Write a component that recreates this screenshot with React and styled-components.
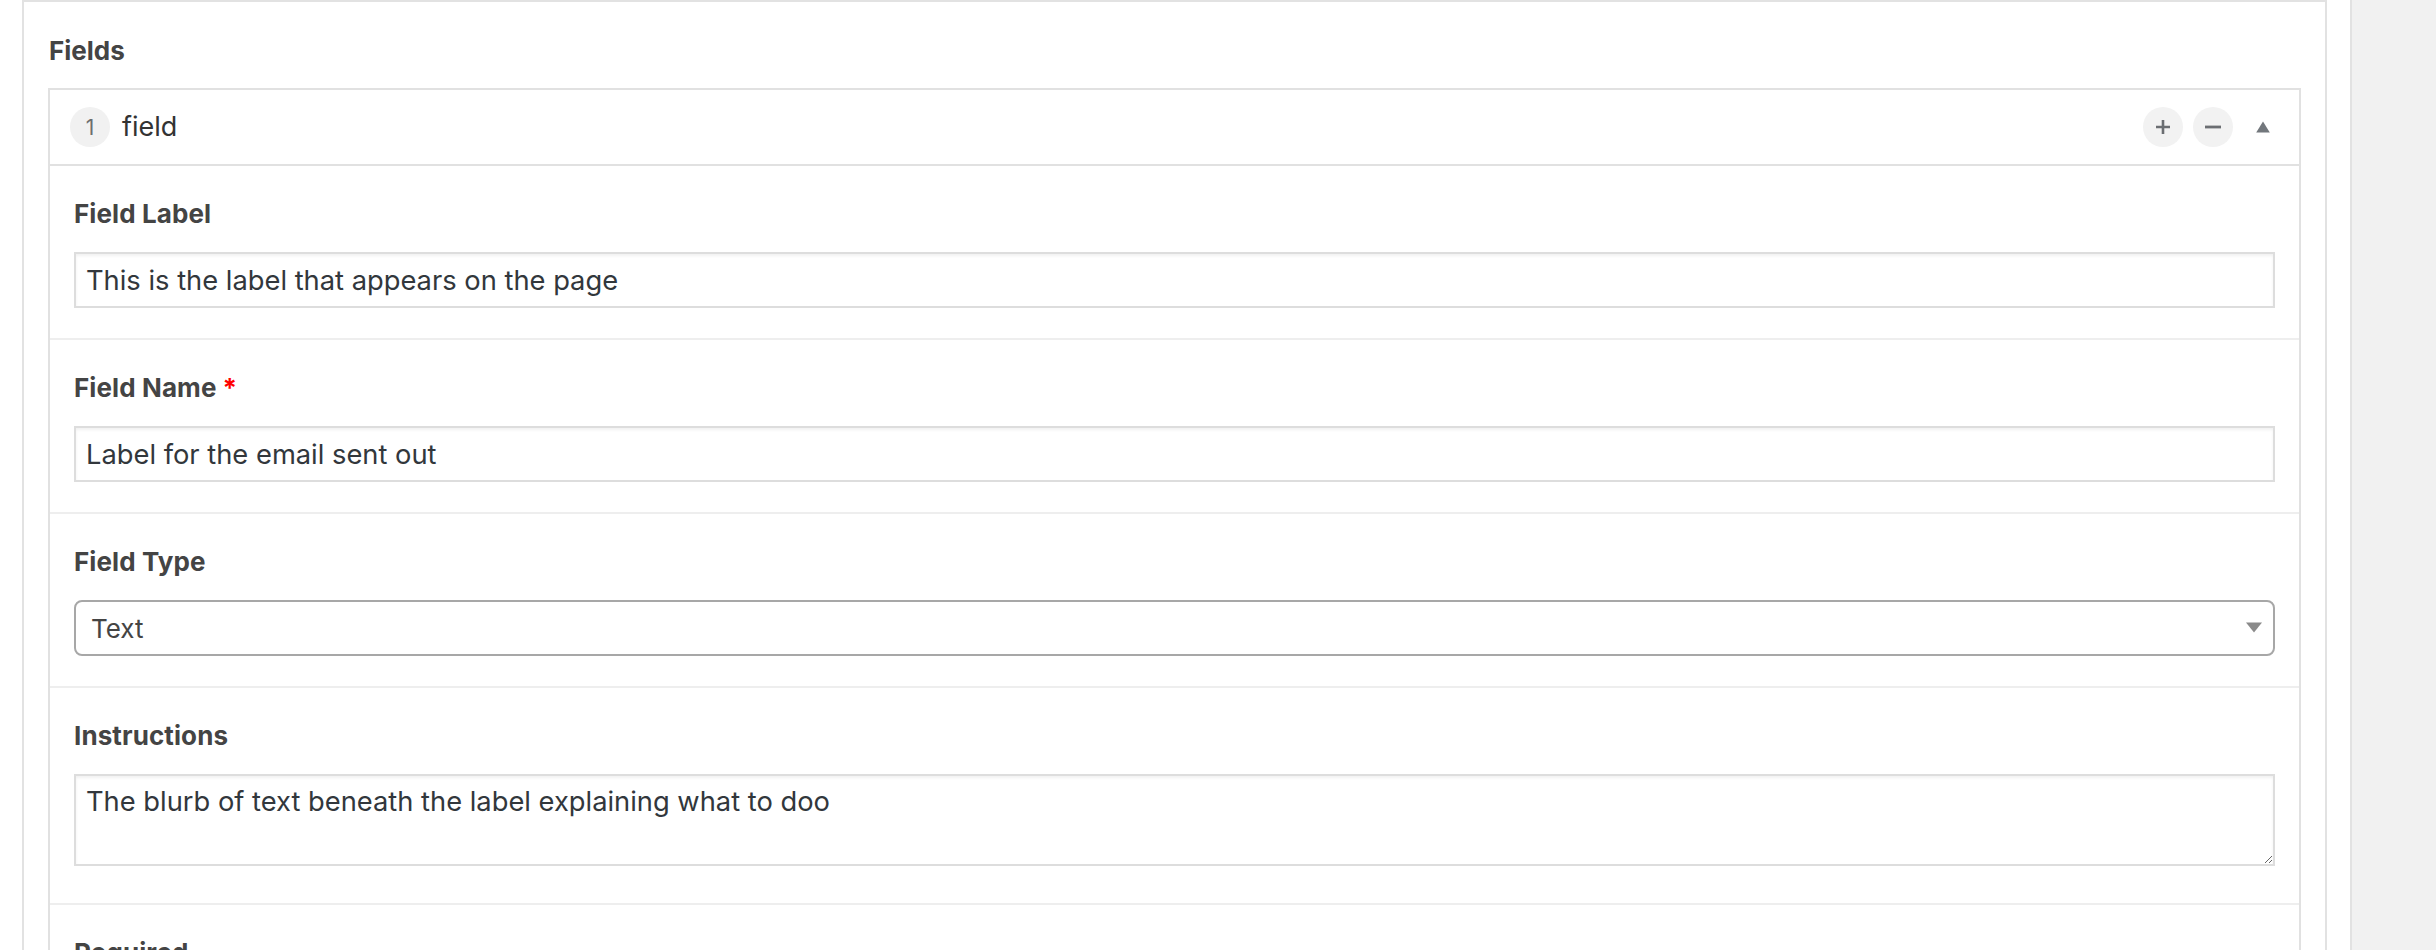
import React from "react";
import styled, { createGlobalStyle } from "styled-components";

const Global = createGlobalStyle`
  html, body {
    margin: 0;
    padding: 0;
    overflow: hidden;
    background: #ffffff;
    font-family: Inter, "Noto Sans", "Liberation Sans", sans-serif;
  }
  * { box-sizing: border-box; }
`;

const Page = styled.div`
  display: flex;
  height: 950px;
  overflow: hidden;
`;

const Main = styled.div`
  flex: 1;
  padding: 0 23px 0 22px;
`;

const Sidebar = styled.aside`
  width: 86px;
  flex: none;
  background: #f1f1f1;
  border-left: 2px solid #e2e2e2;
`;

const Panel = styled.section`
  border: 2px solid #e2e2e2;
  padding: 33px 24px 40px;
  background: #fff;
`;

const PanelTitle = styled.h2`
  margin: 0 0 21px;
  font-size: 26px;
  line-height: 32px;
  font-weight: 700;
  color: #444;
  padding-left: 1px;
`;

const Repeater = styled.div`
  border: 2px solid #e1e1e1;
`;

const Header = styled.div`
  display: flex;
  align-items: center;
  height: 76px;
  padding: 0 16px 0 20px;
  border-bottom: 2px solid #e1e1e1;
`;

const Badge = styled.span`
  width: 40px;
  height: 40px;
  border-radius: 50%;
  background: #f1f1f1;
  color: #6e6e6e;
  font-size: 21px;
  display: flex;
  align-items: center;
  justify-content: center;
  flex: none;
`;

const RowTitle = styled.span`
  margin-left: 12px;
  margin-top: -2px;
  font-size: 27px;
  color: #333;
  flex: 1;
`;

const Actions = styled.div`
  display: flex;
  align-items: center;
  gap: 10px;
`;

const RoundButton = styled.button`
  width: 40px;
  height: 40px;
  border-radius: 50%;
  border: none;
  padding: 0;
  background: #f2f2f2;
  display: flex;
  align-items: center;
  justify-content: center;
  cursor: pointer;
`;

const Toggle = styled.span`
  width: 40px;
  height: 40px;
  display: flex;
  align-items: center;
  justify-content: center;
`;

const Field = styled.div`
  padding: 30px 24px ${(p) => p.$bottom || 30}px;
  border-top: ${(p) => (p.$first ? "none" : "2px solid #eeeeee")};
`;

const Label = styled.label`
  display: block;
  margin: 0 0 20px;
  font-size: 26px;
  line-height: 36px;
  font-weight: 700;
  color: #444;
  letter-spacing: 0.1px;
`;

const Required = styled.span`
  color: #f00;
  margin-left: 6px;
`;

const TextInput = styled.input`
  display: block;
  width: 100%;
  height: 56px;
  border: 2px solid #dddddd;
  box-shadow: inset 0 2px 3px rgba(0, 0, 0, 0.06);
  padding: 0 10px;
  font-family: inherit;
  font-size: 27.3px;
  color: #32373c;
  background: #fff;
  outline: none;
`;

const SelectWrap = styled.div`
  position: relative;
`;

const Select = styled.select`
  display: block;
  width: 100%;
  height: 56px;
  appearance: none;
  -webkit-appearance: none;
  border: 2px solid #a7a7a7;
  border-radius: 8px;
  padding: 0 50px 0 15px;
  font-family: inherit;
  font-size: 26px;
  color: #444;
  background: #fff;
  outline: none;
`;

const SelectArrow = styled.svg`
  position: absolute;
  right: 13px;
  top: 22px;
  pointer-events: none;
`;

const TextArea = styled.textarea`
  display: block;
  width: 100%;
  height: 92px;
  border: 2px solid #dddddd;
  box-shadow: inset 0 2px 3px rgba(0, 0, 0, 0.06);
  padding: 6px 10px;
  font-family: inherit;
  font-size: 27.3px;
  line-height: 40px;
  color: #32373c;
  background: #fff;
  outline: none;
  resize: vertical;
`;

const RadioRow = styled.div`
  display: flex;
  gap: 24px;
  font-size: 26px;
  color: #444;
`;

function PlusIcon() {
  return (
    <svg width="16" height="16" viewBox="0 0 16 16">
      <path d="M8 1v14M1 8h14" stroke="#6b6e72" strokeWidth="2.6" fill="none" />
    </svg>
  );
}

function MinusIcon() {
  return (
    <svg width="18" height="16" viewBox="0 0 18 16">
      <path d="M1 8h16" stroke="#6b6e72" strokeWidth="2.8" fill="none" />
    </svg>
  );
}

export default function App() {
  return (
    <>
      <Global />
      <Page>
        <Main>
          <Panel>
            <PanelTitle>Fields</PanelTitle>
            <Repeater>
              <Header>
                <Badge>1</Badge>
                <RowTitle>field</RowTitle>
                <Actions>
                  <RoundButton aria-label="Add row">
                    <PlusIcon />
                  </RoundButton>
                  <RoundButton aria-label="Remove row">
                    <MinusIcon />
                  </RoundButton>
                  <Toggle>
                    <svg width="14" height="12" viewBox="0 0 14 12">
                      <path d="M7 0.5L13.8 11.5H0.2Z" fill="#72777c" />
                    </svg>
                  </Toggle>
                </Actions>
              </Header>

              <Field $first>
                <Label>Field Label</Label>
                <TextInput defaultValue="This is the label that appears on the page" />
              </Field>

              <Field>
                <Label>
                  Field Name<Required>*</Required>
                </Label>
                <TextInput defaultValue="Label for the email sent out" />
              </Field>

              <Field>
                <Label>Field Type</Label>
                <SelectWrap>
                  <Select defaultValue="text">
                    <option value="text">Text</option>
                    <option value="email">Email</option>
                    <option value="textarea">Text Area</option>
                  </Select>
                  <SelectArrow width="16" height="11" viewBox="0 0 16 11">
                    <path d="M0 0.5H16L8 10.5Z" fill="#8a8a8a" />
                  </SelectArrow>
                </SelectWrap>
              </Field>

              <Field $bottom={37}>
                <Label>Instructions</Label>
                <TextArea defaultValue="The blurb of text beneath the label explaining what to doo" />
              </Field>

              <Field>
                <Label>Required</Label>
                <RadioRow>
                  <span>Yes</span>
                  <span>No</span>
                </RadioRow>
              </Field>
            </Repeater>
          </Panel>
        </Main>
        <Sidebar />
      </Page>
    </>
  );
}
